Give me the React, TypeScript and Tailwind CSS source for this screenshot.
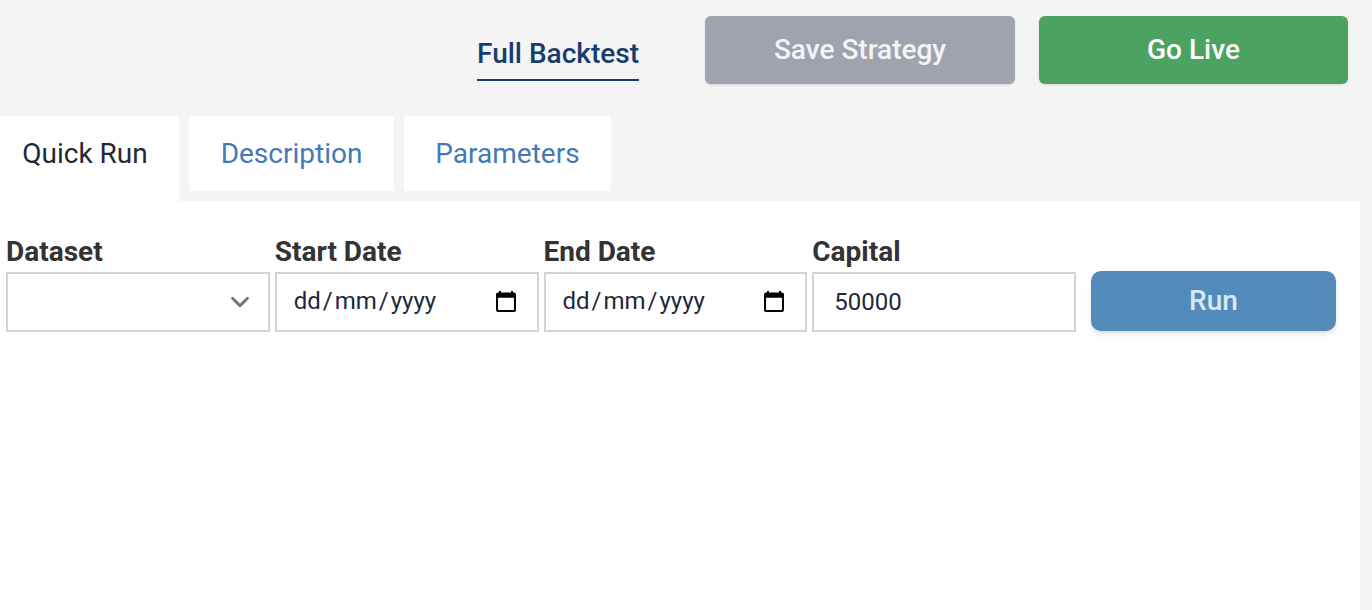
import type { ReactNode } from "react";

export default function App() {
  return (
    <div className="flex h-[610px] w-[1372px] flex-col overflow-hidden bg-[#f4f4f4] font-['Roboto',sans-serif] text-[28px] leading-10 text-gray-800">

      {/* TOP ACTIONS */}
      <header className="flex justify-end pt-4 pr-6">
        <a href="#" className="mt-[18px] mr-[66px] h-[47px] border-b-2 border-[#163d70] font-medium text-[#163d70]">
          Full Backtest
        </a>
        <button className="mr-6 h-[68px] w-[310px] rounded-md bg-[#9ea3ae] font-medium text-gray-100 shadow-sm">
          Save Strategy
        </button>
        <button className="h-[68px] w-[309px] rounded-md bg-[#4ca361] font-medium text-white shadow-sm">
          Go Live
        </button>
      </header>

      {/* TABS */}
      <nav className="mt-8 flex h-[85px] items-start gap-[10px]">
        <button className="h-[85px] w-[179px] bg-white pr-[9px] pb-[10px]">Quick Run</button>
        <button className="h-[75px] w-[205px] bg-white text-[#4479b6]">Description</button>
        <button className="h-[75px] w-[207px] bg-white text-[#4479b6]">Parameters</button>
      </nav>

      {/* QUICK RUN PANEL */}
      <main className="mr-3 flex-1 bg-white pt-[31px] pl-[6px]">
        <div className="flex items-end">
          <div className="grid w-[1070px] grid-cols-4 gap-[5px]">
            <Field label="Dataset">
              <button aria-label="Dataset" className="flex w-full justify-end pr-[18px]">
                <svg width="20" height="12" viewBox="0 0 20 12" fill="none" className="text-[#6b7280]">
                  <path d="M2.5 2.2 10 9.7l7.5-7.5" stroke="currentColor" strokeWidth="2.8" strokeLinecap="round" strokeLinejoin="round" />
                </svg>
              </button>
            </Field>
            <Field label="Start Date">
              <DateValue />
            </Field>
            <Field label="End Date">
              <DateValue />
            </Field>
            <Field label="Capital">
              <input defaultValue="50000" className="w-full pl-5 outline-none" />
            </Field>
          </div>
          <button className="mb-px ml-[15px] h-[60px] w-[245px] rounded-[10px] bg-[#528bb9] font-medium text-[#d7e8f3] shadow-md">
            Run
          </button>
        </div>
      </main>
    </div>
  );
}

// --- SUB-COMPONENTS ---

function Field({ label, children }: { label: string; children: ReactNode }) {
  return (
    <div>
      <p className="font-bold text-[#333]">{label}</p>
      <div className="flex h-[60px] items-center border-2 border-[#d1d5db] bg-white text-2xl">{children}</div>
    </div>
  );
}

function DateValue() {
  return (
    <div className="flex w-full items-center justify-between pr-[21px] pl-4">
      <span className="flex pb-0.5">
        <span className="px-px">dd</span>
        <span className="px-px">/</span>
        <span className="px-px">mm</span>
        <span className="px-px">/</span>
        <span className="px-px">yyyy</span>
      </span>
      <svg width="20" height="22" viewBox="0 0 20 22" className="text-black">
        <path
          fill="currentColor"
          fillRule="evenodd"
          d="M3 0h2v1.5h10V0h2v1.5h1a2 2 0 0 1 2 2V19a2 2 0 0 1-2 2H2a2 2 0 0 1-2-2V3.500a2 2 0 0 1 2-2h1zM2 6.700V19h16V6.700z"
        />
      </svg>
    </div>
  );
}
